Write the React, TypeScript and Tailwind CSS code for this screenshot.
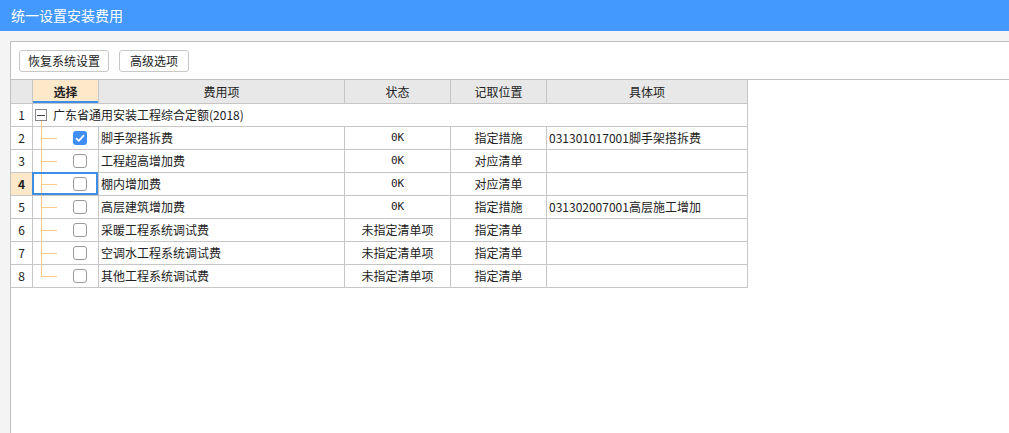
import React from "react";

type Row = {
  no: number;
  name: string;
  checked?: boolean;
  status: string;
  place: string;
  detail: string;
};

const ROWS: Row[] = [
  { no: 2, name: "脚手架搭拆费", checked: true, status: "OK", place: "指定措施", detail: "031301017001脚手架搭拆费" },
  { no: 3, name: "工程超高增加费", status: "OK", place: "对应清单", detail: "" },
  { no: 4, name: "棚内增加费", status: "OK", place: "对应清单", detail: "" },
  { no: 5, name: "高层建筑增加费", status: "OK", place: "指定措施", detail: "031302007001高层施工增加" },
  { no: 6, name: "采暖工程系统调试费", status: "未指定清单项", place: "指定清单", detail: "" },
  { no: 7, name: "空调水工程系统调试费", status: "未指定清单项", place: "指定清单", detail: "" },
  { no: 8, name: "其他工程系统调试费", status: "未指定清单项", place: "指定清单", detail: "" },
];

// column widths include the 1px right border of each cell
const gridCols = "grid grid-cols-[22px_66px_246px_106px_96px_201px]";
const cell = "border-r border-b border-[#c6c6c6] flex items-center";

function Checkbox({ checked }: { checked?: boolean }) {
  if (checked) {
    return (
      <span className="block w-[14px] h-[14px] rounded-[3px] bg-[#3f8ef6] flex items-center justify-center">
        <svg width="10" height="8" viewBox="0 0 10 8" fill="none">
          <path d="M1 4.2 L3.8 6.8 L9 1.2" stroke="white" strokeWidth="1.8" />
        </svg>
      </span>
    );
  }
  return <span className="block w-[14px] h-[14px] rounded-[3px] border border-[#9a9a9a] bg-white" />;
}

export default function App() {
  return (
    <div
      className="w-[1009px] h-[433px] bg-[#f4f4f4] overflow-hidden text-[12px] text-[#222]"
      style={{ fontFamily: '"Noto Sans CJK SC", "Noto Sans", sans-serif' }}
    >
      <div className="h-[31px] bg-[#4399fe] text-white text-[14px] flex items-center pl-[11px]">
        统一设置安装费用
      </div>

      <div className="mt-[10px] ml-[10px] h-[392px] bg-white border-l border-t border-[#c0c0c0]">
        {/* toolbar */}
        <div className="h-[38px] flex items-start pt-[8px] pl-[8px] gap-[10px] border-b border-[#c0c0c0]">
          <button className="h-[22px] w-[90px] border border-[#c8c8c8] rounded-[3px] bg-white text-[12px] leading-none">
            恢复系统设置
          </button>
          <button className="h-[22px] w-[70px] border border-[#c8c8c8] rounded-[3px] bg-white text-[12px] leading-none">
            高级选项
          </button>
        </div>

        {/* grid */}
        <div className="w-[737px]">
          <div className={`${gridCols} h-[24px] bg-[#e8e8e8]`}>
            <div className={cell} />
            <div className={`${cell} relative justify-center bg-[#fde8c9] font-bold`}>
              选择
              <span className="absolute left-0 right-0 bottom-0 h-[2px] bg-[#3b8fe8]" />
            </div>
            <div className={`${cell} justify-center`}>费用项</div>
            <div className={`${cell} justify-center`}>状态</div>
            <div className={`${cell} justify-center`}>记取位置</div>
            <div className={`${cell} justify-center`}>具体项</div>
          </div>

          <div className={`${gridCols} h-[23px]`}>
            <div className={`${cell} justify-center`}>1</div>
            <div className={`${cell} relative col-span-5 pl-[2px]`}>
              <span className="w-[12px] h-[12px] border border-[#888] flex items-center justify-center mr-[6px] bg-white">
                <span className="w-[8px] h-px bg-[#444]" />
              </span>
              广东省通用安装工程综合定额(2018)
              <span className="absolute left-[8px] top-[17px] -bottom-px w-px bg-[#fccb88]" />
            </div>
          </div>

          {ROWS.map((r, i) => {
            const sel = r.no === 4;
            const last = i === ROWS.length - 1;
            return (
              <div key={r.no} className={`${gridCols} h-[23px]`}>
                <div className={`${cell} justify-center ${sel ? "bg-[#fde8c9] font-bold" : ""}`}>{r.no}</div>
                <div className={`${cell} relative`}>
                  <span className={`absolute left-[8px] top-0 w-px bg-[#fccb88] ${last ? "h-[11px]" : "-bottom-px"}`} />
                  <span className="absolute left-[8px] top-[11px] w-[16px] h-px bg-[#fccb88]" />
                  <span className="ml-[40px]">
                    <Checkbox checked={r.checked} />
                  </span>
                  {sel && <span className="absolute -left-px -top-px right-0 bottom-0 border-2 border-[#3f8ee6]" />}
                </div>
                <div className={`${cell} pl-[2px]`}>{r.name}</div>
                <div className={`${cell} justify-center`}>
                  {r.status === "OK" ? (
                    <span className="text-[11px]" style={{ fontFamily: '"DejaVu Sans Mono", monospace' }}>0K</span>
                  ) : (
                    r.status
                  )}
                </div>
                <div className={`${cell} justify-center`}>{r.place}</div>
                <div className={`${cell} pl-[2px]`}>{r.detail}</div>
              </div>
            );
          })}
        </div>
      </div>
    </div>
  );
}
